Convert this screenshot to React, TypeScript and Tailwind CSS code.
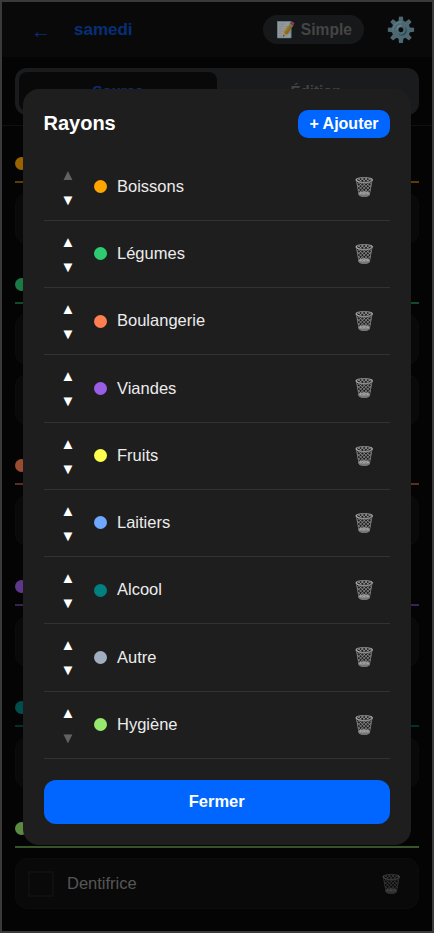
import React from 'react';

const rayons = [
  { name: 'Boissons', color: '#ffa500' },
  { name: 'Légumes', color: '#2ecc71' },
  { name: 'Boulangerie', color: '#ff7f50' },
  { name: 'Viandes', color: '#9b5de5' },
  { name: 'Fruits', color: '#ffff4d' },
  { name: 'Laitiers', color: '#6fa8ff' },
  { name: 'Alcool', color: '#008080' },
  { name: 'Autre', color: '#a0aec0' },
  { name: 'Hygiène', color: '#98e86f' },
];

// page behind the modal: one header + its item cards per section
const sections = [
  { color: '#ffa500', items: [''] },
  { color: '#2ecc71', items: ['', ''] },
  { color: '#ff7f50', items: [''] },
  { color: '#9b5de5', items: [''] },
  { color: '#008080', items: [''] },
  { color: '#98e86f', items: ['Dentifrice'] },
];

export default function App() {
  return (
    <div className="relative w-[434px] h-[933px] overflow-hidden border-2 border-[#3a3a3a] bg-[#080808] font-['Liberation_Sans',sans-serif]">
      {/* Page behind */}
      <div className="h-[55px] bg-[#101010] flex items-center pl-[29px] pr-[16px]">
        <span className="text-[#0a4fc4] text-[20px] leading-none w-[43px] pt-[3px]">←</span>
        <span className="text-[#0a4fc4] text-[17px] font-bold">samedi</span>
        <div className="ml-auto flex items-center gap-[6px] h-[29px] pl-[13px] pr-[12px] rounded-full bg-[#25282b] text-[#737373] text-[15.6px] font-bold">
          <span>📝</span>
          <span>Simple</span>
        </div>
        <span className="ml-[22px] text-[24px] leading-none">⚙️</span>
      </div>
      <div className="mx-[13px] mt-[11px] h-[47px] rounded-xl bg-[#2a2e31] p-[4px] flex">
        <div className="flex-1 rounded-lg bg-[#101010] text-[#0a4fc4] font-bold text-[15px] flex items-center justify-center">Source</div>
        <div className="flex-1 text-[#737373] font-bold text-[15px] flex items-center justify-center">Édition</div>
      </div>
      <div className="mt-[10px] border-t border-[#1c1c1e]" />
      <div className="px-[13px] pt-[31px] flex flex-col">
        {sections.map((s, i) => (
          <div key={i} className="mb-[34px]">
            <div className="h-[24px] flex items-start">
              <div className="w-[13px] h-[13px] rounded-full" style={{ backgroundColor: s.color }} />
            </div>
            <div className="h-[2px] opacity-60" style={{ backgroundColor: s.color }} />
            <div className="mt-[10px] flex flex-col gap-[9px]">
              {s.items.map((it, j) => (
                <div key={j} className="h-[51px] rounded-xl bg-[#101010] border border-[#141414] flex items-center pl-[12px] pr-[14px]">
                  <div className="w-[26px] h-[26px] border-2 border-[#1a1a1a]" />
                  <span className="ml-[13px] text-[16.5px] text-[#8e8e8e] pb-[1px]">{it}</span>
                  <span className="ml-auto mr-[2px] text-[18px] leading-none grayscale opacity-50">🗑️</span>
                </div>
              ))}
            </div>
          </div>
        ))}
      </div>

      {/* Modal */}
      <div className="absolute inset-0 bg-black/40 flex items-center justify-center">
        <div className="w-[388px] h-[756px] rounded-2xl bg-[#1e1e1e] pl-[20.5px] pr-[21px] pt-[21px] flex flex-col">
          <div className="flex items-center justify-between h-[28px]">
            <span className="text-white text-[20px] font-bold pb-[2px]">Rayons</span>
            <button className="w-[92px] h-[28px] rounded-[10px] bg-[#0066ff] text-white text-[16px] font-bold">+ Ajouter</button>
          </div>
          <div className="mt-[16px] flex flex-col">
            {rayons.map((r, i) => (
              <div key={r.name} className="h-[67.25px] flex items-center border-b border-[#333333]">
                <div className="w-[49px] h-[50px] flex flex-col items-center text-white text-[15px] leading-[25px]">
                  <span className={i === 0 ? 'opacity-30' : ''}>▲</span>
                  <span className={i === rayons.length - 1 ? 'opacity-30' : ''}>▼</span>
                </div>
                <div className="ml-[1px] w-[13px] h-[13px] rounded-full" style={{ backgroundColor: r.color }} />
                <span className="ml-[10.5px] text-[16.5px] text-[#ececec] pb-[1px]">{r.name}</span>
                <span className="ml-auto mr-[15px] text-[18px] leading-none grayscale opacity-80">🗑️</span>
              </div>
            ))}
          </div>
          <button className="mt-[21px] h-[44px] rounded-xl bg-[#0066ff] text-white text-[16.5px] font-bold pb-[1px]">Fermer</button>
        </div>
      </div>
    </div>
  );
}
